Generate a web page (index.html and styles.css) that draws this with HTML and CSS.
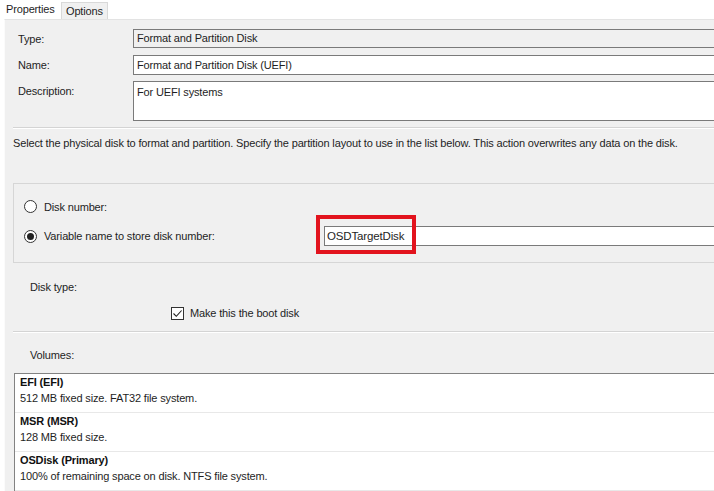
FILE: index.html
```html
<!DOCTYPE html>
<html>
<head>
<meta charset="utf-8">
<link rel="stylesheet" href="styles.css">
</head>
<body>
<div class="window">
  <div class="tabs">
    <div class="tab active">Properties</div>
    <div class="tab">Options</div>
  </div>
  <div class="panel">
    <div class="fields">
      <div class="row row-type">
        <span class="label">Type:</span>
        <div class="box readonly">Format and Partition Disk</div>
      </div>
      <div class="row row-name">
        <span class="label">Name:</span>
        <div class="box">Format and Partition Disk (UEFI)</div>
      </div>
      <div class="row row-desc">
        <span class="label">Description:</span>
        <div class="box tall">For UEFI systems</div>
      </div>
    </div>
    <div class="sep sep-top"></div>
    <p class="intro">Select the physical disk to format and partition. Specify the partition layout to use in the list below. This action overwrites any data on the disk.</p>

    <div class="group">
      <div class="opt opt1">
        <span class="radio"></span>
        <span>Disk number:</span>
      </div>
      <div class="opt opt2">
        <span class="radio checked"></span>
        <span class="opt-label">Variable name to store disk number:</span>
        <div class="var-wrap">
          <div class="box var">OSDTargetDisk</div>
          <div class="highlight"></div>
        </div>
      </div>
    </div>

    <div class="disktype">Disk type:</div>
    <div class="check-row">
      <span class="checkbox">
        <svg width="11" height="11" viewBox="0 0 11 11"><path d="M1.5 5.5 L4.3 8.3 L9.6 2.5" fill="none" stroke="#222" stroke-width="1.1"/></svg>
      </span>
      <span>Make this the boot disk</span>
    </div>
    <div class="sep sep-mid"></div>
    <div class="volumes-label">Volumes:</div>
    <div class="list">
      <div class="item">
        <div class="item-title">EFI (EFI)</div>
        <div class="item-desc">512 MB fixed size. FAT32 file system.</div>
      </div>
      <div class="item">
        <div class="item-title">MSR (MSR)</div>
        <div class="item-desc">128 MB fixed size.</div>
      </div>
      <div class="item">
        <div class="item-title">OSDisk (Primary)</div>
        <div class="item-desc">100% of remaining space on disk. NTFS file system.</div>
      </div>
    </div>
  </div>
</div>
</body>
</html>
```

FILE: styles.css
```css
html, body {
  margin: 0;
  padding: 0;
  background: #ffffff;
  overflow: hidden;
}
body {
  font-family: "Liberation Sans", Arial, sans-serif;
  font-size: 11px;
  letter-spacing: -0.15px;
  color: #1e1e1e;
  width: 714px;
  height: 491px;
}
.window {
  width: 714px;
  height: 491px;
  overflow: hidden;
}
.tabs {
  display: flex;
  height: 19px;
  align-items: flex-end;
  background: #ffffff;
}
.tab {
  box-sizing: border-box;
  height: 17px;
  padding: 0 4px;
  line-height: 16px;
  border: 1px solid #d9d9d9;
  border-bottom: none;
  background: #f0f0f0;
}
.tab.active {
  height: 19px;
  width: 61px;
  padding-left: 5px;
  line-height: 17px;
  background: #ffffff;
  border-color: #ffffff;
}
.panel {
  margin-left: 4px;
  background: #f0f0f0;
  border-top: 1px solid #e3e3e3;
  border-left: 1px solid #fbfbfb;
  height: 480px;
}
.fields {
  display: flex;
  flex-direction: column;
  padding-top: 9px;
}
.row {
  display: flex;
  align-items: center;
}
.row-name { margin-top: 7px; }
.row-desc { margin-top: 6px; align-items: flex-start; }
.label {
  width: 115px;
  padding-left: 13px;
}
.row-desc .label { padding-top: 4px; }
.box {
  box-sizing: border-box;
  flex: 1;
  height: 20px;
  line-height: 18px;
  padding-left: 3px;
  background: #ffffff;
  border: 1px solid #7a7a7a;
  border-right: none;
}
.box.readonly {
  height: 19px;
  line-height: 17px;
  background: #f0f0f0;
}
.box.tall {
  height: 40px;
  padding-top: 1px;
}
.sep {
  height: 1px;
  background: #d4d4d4;
  border-bottom: 1px solid #ffffff;
  margin-left: 8px;
}
.sep-top { margin-top: 6px; }
.intro {
  margin: 7px 0 0 8px;
  line-height: 14px;
}
.group {
  margin: 33px 0 0 8px;
  height: 80px;
  border: 1px solid #d6d6d6;
  border-right: none;
  box-sizing: border-box;
}
.opt {
  display: flex;
  align-items: center;
  padding-left: 10px;
}
.opt1 { margin-top: 16px; height: 13px; }
.opt2 { margin-top: 13px; height: 20px; }
.radio {
  box-sizing: border-box;
  width: 13px;
  height: 13px;
  border: 1px solid #333333;
  border-radius: 50%;
  background: #ffffff;
  margin-right: 7px;
  display: flex;
  align-items: center;
  justify-content: center;
}
.radio.checked::after {
  content: "";
  width: 7px;
  height: 7px;
  border-radius: 50%;
  background: #222222;
}
.opt-label { width: 280px; }
.var-wrap {
  position: relative;
  flex: 1;
  display: flex;
}
.box.var {
  height: 20px;
  line-height: 18px;
  padding-left: 2px;
  font-size: 11.5px;
}
.highlight {
  position: absolute;
  left: -8px;
  top: -11px;
  width: 100px;
  height: 39px;
  box-sizing: border-box;
  border: 4px solid #e2131d;
}
.disktype {
  margin: 17px 0 0 25px;
  line-height: 14px;
}
.check-row {
  display: flex;
  align-items: center;
  margin: 12px 0 0 166px;
  height: 14px;
}
.checkbox {
  box-sizing: border-box;
  width: 13px;
  height: 13px;
  border: 1px solid #333333;
  background: #ffffff;
  margin-right: 6px;
  display: flex;
  align-items: center;
  justify-content: center;
}
.checkbox svg { display: block; }
.sep-mid { margin-top: 11px; }
.volumes-label {
  margin: 15px 0 0 25px;
  line-height: 14px;
}
.list {
  margin: 11px 0 0 9px;
  background: #ffffff;
  border-top: 1px solid #828282;
  border-left: 1px solid #828282;
}
.item {
  height: 38px;
  border-bottom: 1px solid #e8e8e8;
  padding-left: 5px;
}
.item-title {
  font-weight: bold;
  padding-top: 1px;
  line-height: 15px;
  color: #111111;
}
.item-desc {
  line-height: 17px;
  color: #1e1e1e;
}
```
